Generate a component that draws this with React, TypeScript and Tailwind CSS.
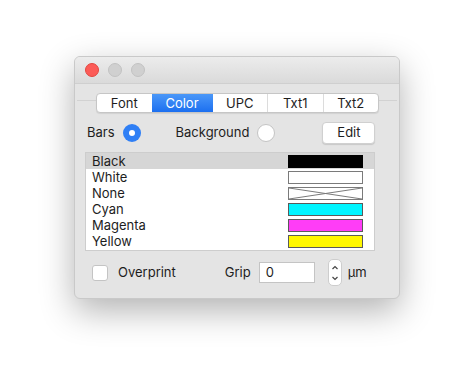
import React from 'react'

const swatches = [
  { name: 'Black', cls: 'bg-black border-black' },
  { name: 'White', cls: 'bg-white border-[#7a7a7a]' },
  { name: 'None', cls: 'bg-white border-[#7a7a7a]', cross: true },
  { name: 'Cyan', cls: 'bg-[#00f5ff] border-[#5a5a5a]' },
  { name: 'Magenta', cls: 'bg-[#ff3df7] border-[#5a5a5a]' },
  { name: 'Yellow', cls: 'bg-[#fff700] border-[#5a5a5a]' },
]

const tabs = ['Font', 'Color', 'UPC', 'Txt1', 'Txt2']

export default function App() {
  return (
    <div className="w-[474px] h-[382px] bg-white pl-[74px] pt-[56px] font-['Inter','Liberation_Sans',sans-serif] text-[13px] text-[#1d1d1d]">
      <div className="w-[326px] h-[243px] rounded-[6px] bg-[#e4e4e4] border border-[#c9c9c9] shadow-[0_12px_34px_rgba(0,0,0,0.3)] overflow-hidden flex flex-col">
        {/* title bar */}
        <div className="h-[27px] shrink-0 bg-gradient-to-b from-[#ececec] to-[#dadada] border-b border-[#cfcfcf] flex items-center gap-[9px] pl-[10px]">
          <span className="w-[14px] h-[14px] rounded-full bg-[#fc5b57] border border-[#e2463f]" />
          <span className="w-[14px] h-[14px] rounded-full bg-[#d0d0d0] border border-[#c2c2c2]" />
          <span className="w-[14px] h-[14px] rounded-full bg-[#d0d0d0] border border-[#c2c2c2]" />
        </div>

        {/* tab control */}
        <div className="relative mt-[9px] h-[20px]">
          <div className="absolute left-[2px] right-[2px] top-[7px] border-t border-[#d2d2d2]" />
          <div className="relative ml-[21px] w-[283px] h-[20px] flex rounded-[4px] bg-white border border-[#c6c6c6] shadow-[0_1px_1px_rgba(0,0,0,0.08)] overflow-hidden">
            {tabs.map((t, i) => (
              <div
                key={t}
                className={
                  (i === 1
                    ? 'bg-gradient-to-b from-[#4a97f8] to-[#1b6ff0] text-white w-[61px] '
                    : 'text-[#1d1d1d] flex-1 ') +
                  (i > 1 && i < 4 ? 'border-r border-[#dcdcdc] ' : '') +
                  'flex items-center justify-center text-[13px] leading-none'
                }
              >
                {t}
              </div>
            ))}
          </div>
        </div>

        {/* Bars / Background / Edit */}
        <div className="flex items-center h-[22px] mt-[9px] pl-[12px]">
          <span>Bars</span>
          <span className="ml-[8px] w-[18px] h-[18px] rounded-full bg-[#2f7ff5] flex items-center justify-center">
            <span className="w-[6px] h-[6px] rounded-full bg-white" />
          </span>
          <span className="ml-[35px]">Background</span>
          <span className="ml-[8px] w-[18px] h-[18px] rounded-full bg-white border border-[#c4c4c4]" />
          <button className="ml-[47px] w-[53px] h-[22px] rounded-[4px] bg-white border border-[#d0d0d0] shadow-[0_1px_1px_rgba(0,0,0,0.12)] text-[13px]">
            Edit
          </button>
        </div>

        {/* colour list */}
        <div className="ml-[10px] mt-[8px] w-[290px] h-[99px] bg-white border border-[#cdcdcd]">
          {swatches.map((s, i) => (
            <div
              key={s.name}
              className={(i === 0 ? 'bg-[#d6d6d6] ' : '') + 'h-[16px] flex items-center pl-[6px] pr-[11px] leading-none'}
            >
              <span className="flex-1">{s.name}</span>
              <span className={'relative w-[75px] h-[13px] border ' + s.cls}>
                {s.cross && (
                  <svg className="absolute inset-0 w-full h-full" viewBox="0 0 73 11" preserveAspectRatio="none">
                    <line x1="0" y1="0" x2="73" y2="11" stroke="#7a7a7a" strokeWidth="1" />
                    <line x1="0" y1="11" x2="73" y2="0" stroke="#7a7a7a" strokeWidth="1" />
                  </svg>
                )}
              </span>
            </div>
          ))}
        </div>

        {/* Overprint / Grip */}
        <div className="flex items-center mt-[8px] h-[27px] pl-[17px]">
          <span className="w-[16px] h-[16px] rounded-[3px] bg-white border border-[#c4c4c4]" />
          <span className="ml-[10px]">Overprint</span>
          <span className="ml-[49px]">Grip</span>
          <div className="ml-[8px] w-[56px] h-[21px] bg-white border border-[#c4c4c4] flex items-center pl-[6px]">0</div>
          <div className="ml-[13px] w-[14px] h-[27px] rounded-[5px] bg-white border border-[#cdcdcd] flex flex-col items-center justify-center">
            <svg width="8" height="20" viewBox="0 0 8 20" fill="none" stroke="#444" strokeWidth="1.2">
              <path d="M1.5 6 L4 3.5 L6.5 6" />
              <path d="M1.5 14 L4 16.5 L6.5 14" />
            </svg>
          </div>
          <span className="ml-[6px]">µm</span>
        </div>
      </div>
    </div>
  )
}
